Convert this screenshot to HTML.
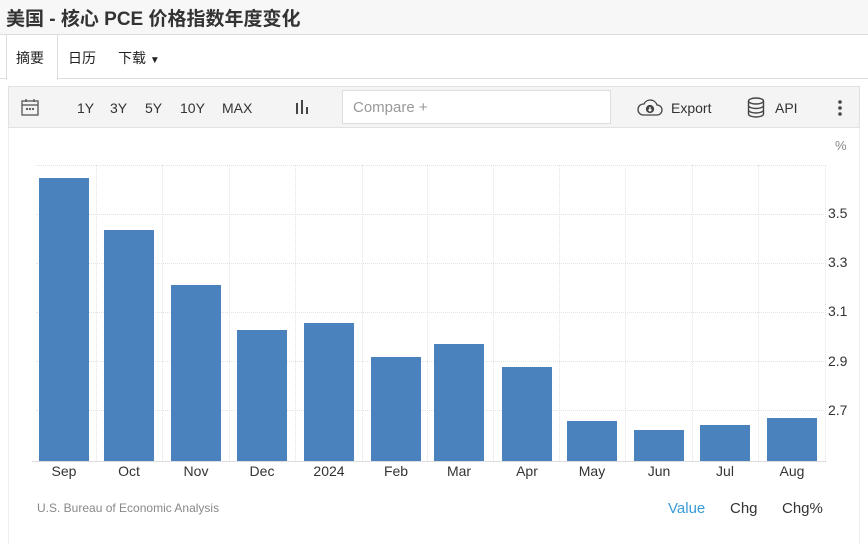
<!DOCTYPE html>
<html><head><meta charset="utf-8"><style>
*{margin:0;padding:0;box-sizing:border-box}
body{width:868px;height:544px;background:#fff;font-family:"Liberation Sans","Noto Sans CJK SC",sans-serif;position:relative;overflow:hidden;color:#333}
.title{position:absolute;left:0;top:0;width:868px;height:35px;background:#f7f7f7;border-bottom:1px solid #ddd;font-size:19px;font-weight:bold;color:#333;padding:4px 0 0 6px}
.tabs{position:absolute;left:0;top:35px;width:868px;height:44px;border-bottom:1px solid #ddd}
.tab{position:absolute;top:13px;font-size:14px;color:#222}
.tab1{position:absolute;left:6px;top:0;width:52px;height:45px;background:#fff;border-right:1px solid #ddd;border-left:1px solid #ddd}
.bar{position:absolute;left:8px;top:86px;width:852px;height:42px;background:#f4f4f4;border:1px solid #e2e2e2}
.tb{position:absolute;top:13px;font-size:14px;color:#333}
.cmp{position:absolute;left:342px;top:90px;width:269px;height:34px;background:#fff;border:1px solid #ddd;font-size:15px;color:#999;padding:8px 0 0 10px}
.chart{position:absolute;left:8px;top:128px;width:852px;height:416px;border-left:1px solid #eee;border-right:1px solid #eee}
.b{position:absolute;width:50px;background:#4a82bd;bottom:83px}
.xl{position:absolute;top:463px;font-size:14px;color:#333;width:60px;text-align:center}
.yl{position:absolute;left:828px;font-size:14px;color:#333}
.vg{position:absolute;top:165px;height:296px;border-left:1px dotted #e4e4e4}
.hg{position:absolute;left:36px;width:790px;border-top:1px dotted #e4e4e4}
</style></head><body>
<div class="title">美国 - 核心 PCE 价格指数年度变化</div>
<div class="tabs"><div class="tab1"></div>
<span class="tab" style="left:16px">摘要</span><span class="tab" style="left:68px">日历</span><span class="tab" style="left:118px">下载 <span style="font-size:10px">▼</span></span></div>
<div class="bar">
<svg style="position:absolute;left:12px;top:11px" width="18" height="18" viewBox="0 0 18 18" fill="none" stroke="#555" stroke-width="1.3"><rect x="1" y="3" width="16" height="14"/><line x1="1" y1="7" x2="17" y2="7"/><line x1="5" y1="1" x2="5" y2="4"/><line x1="13" y1="1" x2="13" y2="4"/><circle cx="6" cy="11" r=".5"/><circle cx="9" cy="11" r=".5"/><circle cx="12" cy="11" r=".5"/></svg>
<span class="tb" style="left:68px">1Y</span><span class="tb" style="left:101px">3Y</span><span class="tb" style="left:136px">5Y</span><span class="tb" style="left:171px">10Y</span><span class="tb" style="left:213px">MAX</span>
<svg style="position:absolute;left:286px;top:12px" width="16" height="16"><rect x="1" y="4" width="2" height="11" fill="#444"/><rect x="6" y="1" width="2" height="14" fill="#444"/><rect x="11" y="8" width="2" height="7" fill="#444"/></svg>
<svg style="position:absolute;left:628px;top:11px" width="26" height="20" viewBox="0 0 26 20" fill="none" stroke="#444" stroke-width="1.3"><path d="M6 17h14a5 5 0 0 0 0-10a7 7 0 0 0-13-1a5.5 5.5 0 0 0-1 11z"/><circle cx="13" cy="11" r="3.5" fill="#444"/><path d="M13 9v4M11.5 11.5l1.5 1.5 1.5-1.5" stroke="#fff"/></svg>
<span class="tb" style="left:662px">Export</span>
<svg style="position:absolute;left:738px;top:10px" width="18" height="21" viewBox="0 0 18 21" fill="none" stroke="#444" stroke-width="1.4"><ellipse cx="9" cy="4" rx="7.5" ry="3"/><path d="M1.5 4v13c0 1.7 3.4 3 7.5 3s7.5-1.3 7.5-3V4M1.5 8.5c0 1.7 3.4 3 7.5 3s7.5-1.3 7.5-3M1.5 13c0 1.7 3.4 3 7.5 3s7.5-1.3 7.5-3"/></svg>
<span class="tb" style="left:766px">API</span>
<svg style="position:absolute;left:829px;top:12px" width="4" height="18"><circle cx="2" cy="3" r="1.8" fill="#444"/><circle cx="2" cy="9" r="1.8" fill="#444"/><circle cx="2" cy="15" r="1.8" fill="#444"/></svg>
</div>
<div class="cmp">Compare +</div>
<div class="chart"></div>
<span style="position:absolute;left:835px;top:138px;font-size:13px;color:#888">%</span>
<div class="hg" style="top:165px"></div><div class="hg" style="top:214px"></div><div class="hg" style="top:263px"></div><div class="hg" style="top:312px"></div><div class="hg" style="top:361px"></div><div class="hg" style="top:410px"></div>
<div class="vg" style="left:96px"></div><div class="vg" style="left:162px"></div><div class="vg" style="left:229px"></div><div class="vg" style="left:295px"></div><div class="vg" style="left:362px"></div><div class="vg" style="left:427px"></div><div class="vg" style="left:493px"></div><div class="vg" style="left:559px"></div><div class="vg" style="left:625px"></div><div class="vg" style="left:692px"></div><div class="vg" style="left:758px"></div><div class="vg" style="left:825px"></div>
<div style="position:absolute;left:32px;top:461px;width:794px;border-top:1px solid #ddd"></div>
<div class="b" style="left:39px;top:178px"></div>
<div class="b" style="left:104px;top:230px"></div>
<div class="b" style="left:171px;top:285px"></div>
<div class="b" style="left:237px;top:330px"></div>
<div class="b" style="left:304px;top:323px"></div>
<div class="b" style="left:371px;top:357px"></div>
<div class="b" style="left:434px;top:344px"></div>
<div class="b" style="left:502px;top:367px"></div>
<div class="b" style="left:567px;top:421px"></div>
<div class="b" style="left:634px;top:430px"></div>
<div class="b" style="left:700px;top:425px"></div>
<div class="b" style="left:767px;top:418px"></div>
<span class="yl" style="top:205px">3.5</span><span class="yl" style="top:254px">3.3</span><span class="yl" style="top:303px">3.1</span><span class="yl" style="top:353px">2.9</span><span class="yl" style="top:402px">2.7</span>
<span class="xl" style="left:34px">Sep</span><span class="xl" style="left:99px">Oct</span><span class="xl" style="left:166px">Nov</span><span class="xl" style="left:232px">Dec</span><span class="xl" style="left:299px">2024</span><span class="xl" style="left:366px">Feb</span><span class="xl" style="left:429px">Mar</span><span class="xl" style="left:497px">Apr</span><span class="xl" style="left:562px">May</span><span class="xl" style="left:629px">Jun</span><span class="xl" style="left:695px">Jul</span><span class="xl" style="left:762px">Aug</span>
<span style="position:absolute;left:37px;top:501px;font-size:12px;color:#888">U.S. Bureau of Economic Analysis</span>
<span style="position:absolute;left:668px;top:500px;font-size:15px;color:#3a9ad9">Value</span>
<span style="position:absolute;left:730px;top:500px;font-size:15px;color:#333">Chg</span>
<span style="position:absolute;left:782px;top:500px;font-size:15px;color:#333">Chg%</span>
</body></html>
